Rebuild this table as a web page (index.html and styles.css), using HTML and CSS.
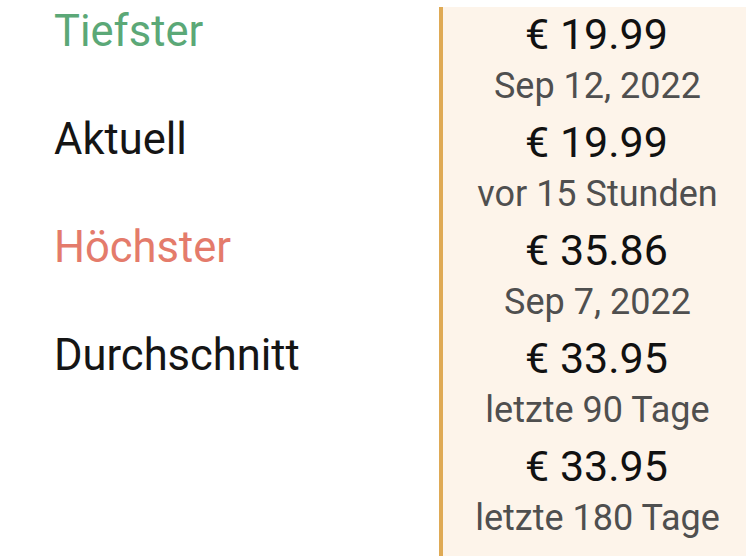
FILE: index.html
```html
<!DOCTYPE html>
<html lang="de">
<head>
<meta charset="utf-8">
<link rel="stylesheet" href="styles.css">
</head>
<body>
<div class="stats">
  <div class="labels">
    <div class="label low">Tiefster</div>
    <div class="label">Aktuell</div>
    <div class="label high">Höchster</div>
    <div class="label">Durchschnitt</div>
  </div>
  <div class="panel">
    <div class="entry"><div class="price">€ 19.99</div><div class="sub">Sep 12, 2022</div></div>
    <div class="entry"><div class="price">€ 19.99</div><div class="sub">vor 15 Stunden</div></div>
    <div class="entry"><div class="price">€ 35.86</div><div class="sub">Sep 7, 2022</div></div>
    <div class="entry"><div class="price">€ 33.95</div><div class="sub">letzte 90 Tage</div></div>
    <div class="entry"><div class="price">€ 33.95</div><div class="sub">letzte 180 Tage</div></div>
  </div>
</div>
</body>
</html>
```
FILE: styles.css
```css
html, body {
  margin: 0;
  padding: 0;
  background: #ffffff;
  font-family: Roboto, "Noto Sans", sans-serif;
}
.stats {
  display: flex;
  padding-top: 7px;
  height: 549px;
  overflow: hidden;
}
.labels {
  width: 385px;
  padding-left: 54px;
  display: flex;
  flex-direction: column;
}
.label {
  height: 108px;
  font-size: 43.5px;
  line-height: 50px;
  color: #151515;
}
.label.low { color: #5ba877; }
.label.high { color: #e47b6b; }
.panel {
  width: 303px;
  border-left: 4px solid #dfaa55;
  background: #fdf4ea;
  display: flex;
  flex-direction: column;
  align-items: center;
}
.entry {
  height: 108px;
  display: flex;
  flex-direction: column;
  align-items: center;
}
.price {
  font-size: 43px;
  line-height: 55px;
  color: #111111;
  padding-left: 4px;
}
.sub {
  font-size: 36px;
  line-height: 46px;
  margin-top: 1px;
  padding-left: 6px;
  color: #4f4f4f;
}
```
